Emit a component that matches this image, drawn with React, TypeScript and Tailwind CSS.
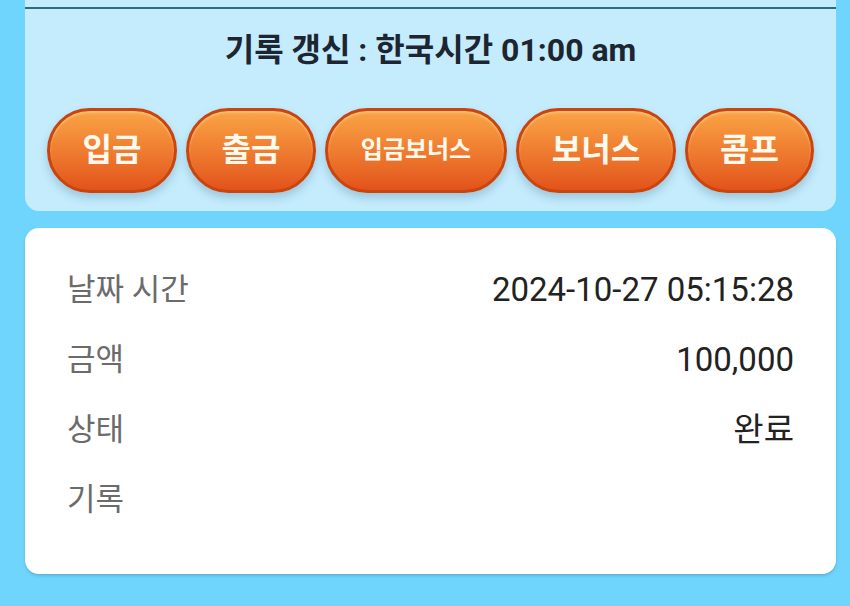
const font = { fontFamily: 'Roboto, "Noto Sans CJK KR", sans-serif' };

const buttons = [
  { label: "입금", w: "w-[130px]", size: "text-[32px]" },
  { label: "출금", w: "w-[130px]", size: "text-[32px]" },
  { label: "입금보너스", w: "w-[182px]", size: "text-[24px]" },
  { label: "보너스", w: "w-[160px]", size: "text-[32px]" },
  { label: "콤프", w: "w-[129px]", size: "text-[32px]" },
];

const rows = [
  { label: "날짜 시간", value: "2024-10-27 05:15:28" },
  { label: "금액", value: "100,000" },
  { label: "상태", value: "완료" },
  { label: "기록", value: "" },
];

export default function App() {
  return (
    <div className="h-[606px] w-full bg-[#6fd5fc] pl-[25px] pr-[14px]" style={font}>
      <div className="rounded-b-[14px] bg-[#c4ecfd] pt-[7px]">
        <div className="h-[2px] bg-[#2a6c82]" />
        <div className="flex h-[82px] items-center justify-center text-[32px] font-bold text-[#1c2530]">
          기록 갱신 : 한국시간 01:00 am
        </div>
        <div className="flex justify-center gap-[9px] pt-[17px] pb-[18px]">
          {buttons.map((b) => (
            <div
              key={b.label}
              className={`${b.w} flex h-[85px] items-center justify-center rounded-full border-[3px] border-[#c9440f] bg-gradient-to-b from-[#f9a445] to-[#e2521a] font-bold text-[#fff9ee] shadow-[0_5px_8px_rgba(40,90,120,0.25),inset_0_2px_2px_rgba(255,220,160,0.5)]`}
            >
              <span className={`${b.size} pb-[2px]`}>{b.label}</span>
            </div>
          ))}
        </div>
      </div>
      <div className="mt-[17px] h-[346px] rounded-[14px] bg-white pl-[42px] pr-[42px] pt-[27px] shadow-[0_2px_3px_rgba(40,90,120,0.25)]">
        {rows.map((r) => (
          <div key={r.label} className="flex h-[70px] items-center justify-between">
            <span className="text-[31px] text-[#6b6b6b]">{r.label}</span>
            <span className="text-[33px] text-[#222222]">{r.value}</span>
          </div>
        ))}
      </div>
    </div>
  );
}
